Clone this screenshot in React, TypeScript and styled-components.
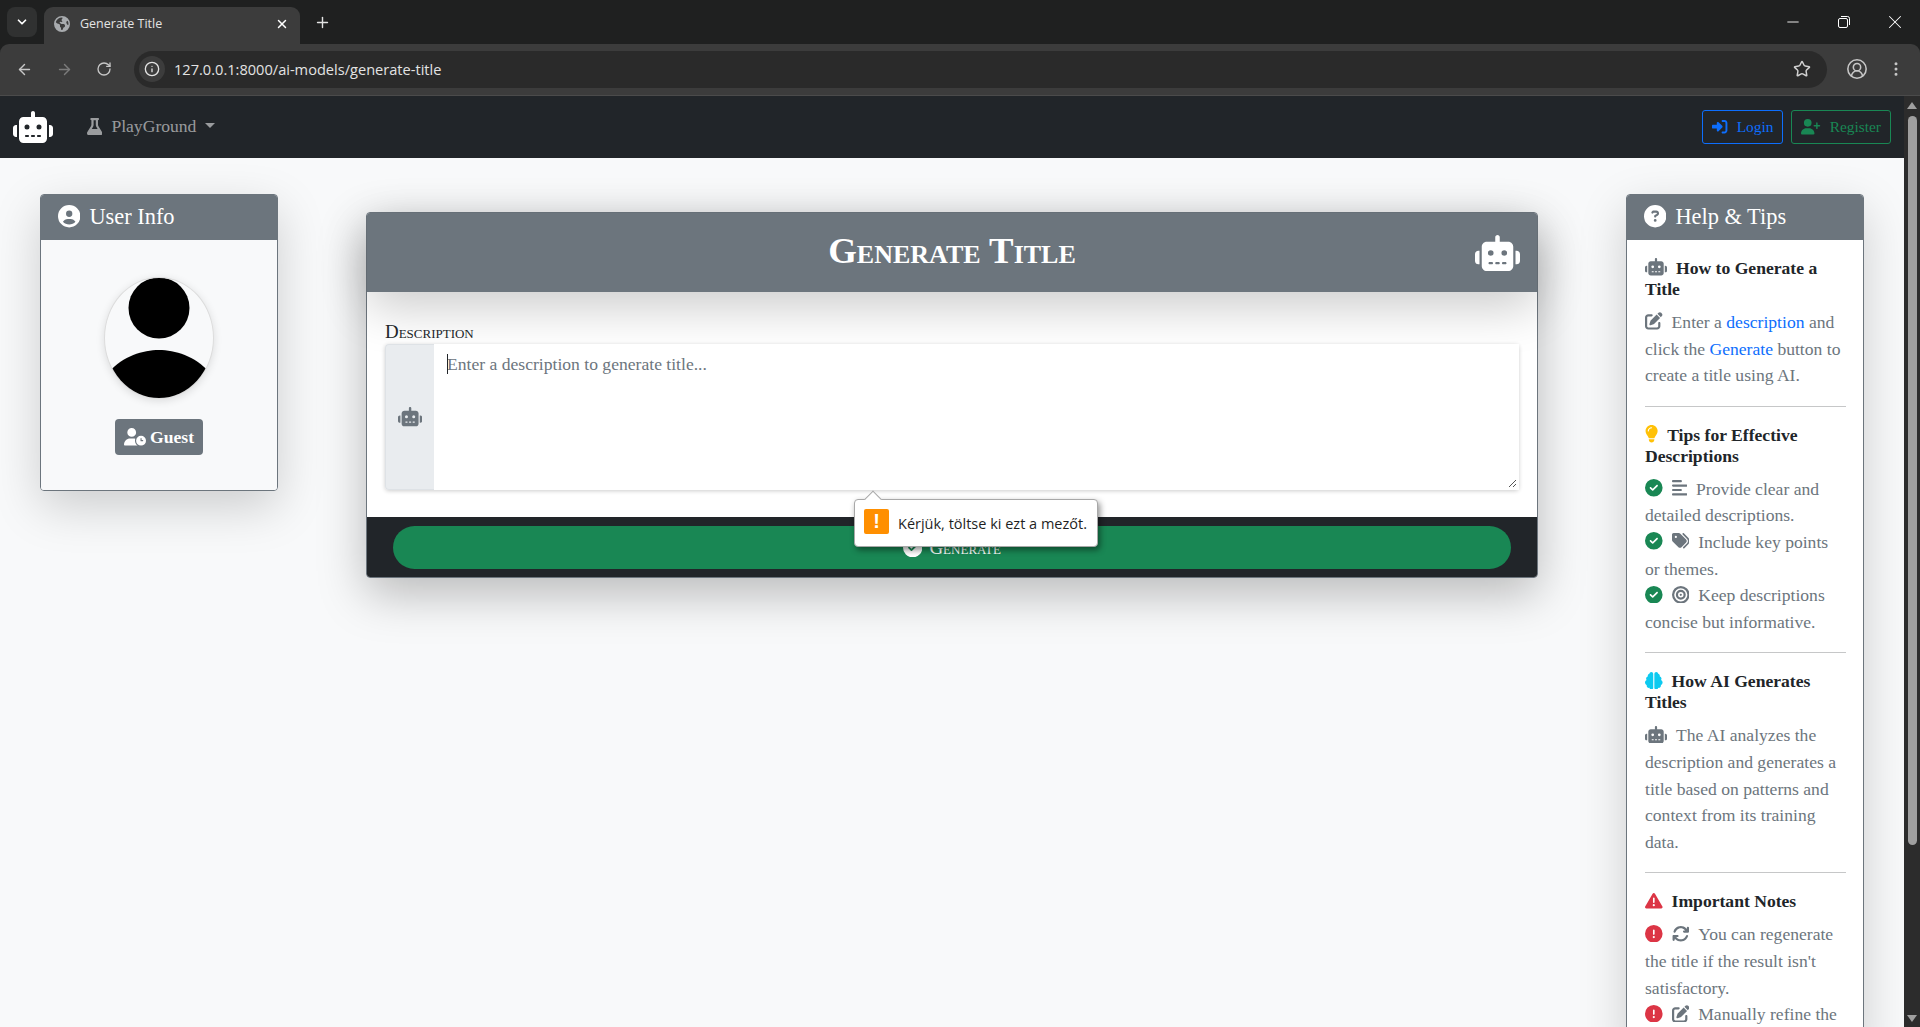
import React from 'react';
import styled, { createGlobalStyle } from 'styled-components';
import { ArrowLeft, ArrowRight, ChevronDown, CircleUserRound, EllipsisVertical, Info, Minus, Plus, RotateCw, Star, X } from 'lucide-react';
import {
  FaAlignLeft,
  FaArrowsRotate,
  FaBrain,
  FaBullseye,
  FaCircleCheck,
  FaCircleExclamation,
  FaCircleQuestion,
  FaCircleUser,
  FaEarthAmericas,
  FaFlask,
  FaLightbulb,
  FaPenToSquare,
  FaRightToBracket,
  FaRobot,
  FaTags,
  FaTriangleExclamation,
  FaUserClock,
  FaUserPlus,
} from 'react-icons/fa6';

const GlobalStyle = createGlobalStyle`
  html, body {
    margin: 0;
    height: 100%;
    overflow: hidden;
    background: #1f2020;
    font-family: "Liberation Serif", "Times New Roman", serif;
  }
  * { box-sizing: border-box; }
`;

const TabStrip = styled.div`
  height: 44px;
  background: #1f2020;
  display: flex;
  align-items: flex-start;
  color: #fff;
  padding: 7px 0 0 7px;
`;

const TabSearch = styled.div`
  width: 30px;
  height: 30px;
  background: #303131;
  border-radius: 8px;
  display: flex;
  align-items: center;
  justify-content: center;
`;

const Tab = styled.div`
  width: 256px;
  height: 37px;
  margin-left: 7px;
  background: #3c3c3c;
  border-radius: 9px 9px 0 0;
  display: flex;
  align-items: center;
  padding: 0 11px 4px 10px;
  gap: 10px;
  font: 12.5px "Open Sans", sans-serif;
  color: #e3e3e3;
`;

const TabTitle = styled.span`
  flex: 1;
`;

const NewTab = styled.div`
  margin: 7px 0 0 14px;
  height: 16px;
  display: flex;
`;

const WindowControls = styled.div`
  margin: -7px 0 0 auto;
  display: flex;
`;

const WindowButton = styled.div`
  width: 51px;
  height: 44px;
  display: flex;
  align-items: center;
  justify-content: center;
`;

const RestoreIcon = styled.svg`
  width: 12px;
  height: 12px;
`;

const Toolbar = styled.div`
  height: 52px;
  background: #3c3c3c;
  border-bottom: 1px solid #4b4b4b;
  border-radius: 9px 9px 0 0;
  display: flex;
  align-items: center;
  padding: 0 0 1px 16px;
  color: #c7c7c7;
`;

const NavButtons = styled.div`
  display: flex;
  align-items: center;
  gap: 23px;
  width: 118px;
`;

const Omnibox = styled.div`
  width: 1693px;
  height: 37px;
  background: #2a2a2a;
  border-radius: 19px;
  display: flex;
  align-items: center;
  padding: 0 16px 0 5px;
  font: 14.6px "Open Sans", sans-serif;
  color: #e3e3e3;
`;

const InfoChip = styled.div`
  width: 26px;
  height: 26px;
  border-radius: 50%;
  background: #3c3c3c;
  display: flex;
  align-items: center;
  justify-content: center;
  margin-right: 9px;
`;

const OmniStar = styled.div`
  margin-left: auto;
  display: flex;
  color: #d0d0d0;
`;

const ToolbarEnd = styled.div`
  display: flex;
  align-items: center;
  gap: 19px;
  margin-left: 19px;
`;

const Viewport = styled.div`
  display: flex;
  height: 931px;
`;

const Page = styled.div`
  flex: 1;
  min-width: 0;
  overflow: hidden;
  position: relative;
  background: #f8f9fa;
`;

const ScrollTrack = styled.div`
  width: 16px;
  background: #2c2c2c;
  display: flex;
  flex-direction: column;
  align-items: center;
  padding-top: 6px;
`;

const ScrollArrow = styled.div<{ $down?: boolean }>`
  width: 0;
  height: 0;
  border-left: 5px solid transparent;
  border-right: 5px solid transparent;
  ${({ $down }) => ($down ? 'border-top: 7px solid #9f9f9f;' : 'border-bottom: 7px solid #9f9f9f;')}
  margin-top: ${({ $down }) => ($down ? 'auto' : '0')};
  margin-bottom: ${({ $down }) => ($down ? '5px' : '0')};
`;

const ScrollThumb = styled.div`
  width: 9px;
  height: 729px;
  margin-top: 7px;
  background: #9f9f9f;
  border-radius: 5px;
`;

const Navbar = styled.nav`
  height: 62px;
  background: #212529;
  display: flex;
  align-items: center;
  padding: 0 13px;
`;

const Brand = styled.div`
  display: flex;
  color: #fff;
`;

const PlayMenu = styled.div`
  display: flex;
  align-items: center;
  margin: -1px 0 0 34px;
  font-size: 17.6px;
  color: rgba(255, 255, 255, 0.55);
`;

const MenuLabel = styled.span`
  margin-left: 9px;
`;

const MenuCaret = styled.span`
  margin-left: 9px;
  margin-top: -2px;
  width: 0;
  height: 0;
  border-top: 5.3px solid currentColor;
  border-left: 5.3px solid transparent;
  border-right: 5.3px solid transparent;
`;

const NavActions = styled.div`
  margin-left: auto;
  display: flex;
  gap: 8px;
`;

const NavButton = styled.div<{ $color: string }>`
  height: 34px;
  padding: 0 9px;
  display: flex;
  align-items: center;
  gap: 9px;
  font-size: 15.4px;
  border: 1px solid ${({ $color }) => $color};
  border-radius: 3px;
  color: ${({ $color }) => $color};
`;

const Content = styled.main`
  display: grid;
  grid-template-columns: 238px 1172px 238px;
  justify-content: space-between;
  align-items: start;
  padding: 36px 40px 0;
`;

const Card = styled.section`
  border: 1px solid #6c757d;
  border-radius: 4px;
  box-shadow: 0 16px 48px rgba(0, 0, 0, 0.175);
  overflow: hidden;
`;

const SideHeader = styled.header`
  height: 45px;
  background: #6c757d;
  color: #fff;
  font-size: 22.4px;
  display: flex;
  align-items: center;
  gap: 9px;
  padding: 0 17px 2px;
`;

const UserBody = styled.div`
  background: #f8f9fa;
  height: 250px;
  display: flex;
  flex-direction: column;
  align-items: center;
  padding-top: 37px;
`;

const Avatar = styled.div`
  width: 110px;
  height: 122px;
  border-radius: 50%;
  border: 1px solid #dcdcdc;
  box-shadow: 0 2px 8px rgba(0, 0, 0, 0.12);
  background: #f8f9fa;
  overflow: hidden;
  display: flex;
`;

const GuestBadge = styled.div`
  margin-top: 20px;
  width: 88px;
  height: 36px;
  background: #6c757d;
  border-radius: 4px;
  color: #fff;
  font-size: 17.6px;
  font-weight: 700;
  display: flex;
  align-items: center;
  justify-content: center;
  gap: 4px;
`;

const MainColumn = styled.div`
  margin-top: 18px;
`;

const MainCard = styled(Card)`
  position: relative;
  overflow: visible;
  box-shadow: 0 16px 48px rgba(0, 0, 0, 0.26);
`;

const MainHeader = styled.header`
  height: 79px;
  background: #6c757d;
  border-radius: 3px 3px 0 0;
  box-shadow: 0 16px 48px rgba(0, 0, 0, 0.2);
  position: relative;
  color: #fff;
  display: flex;
  align-items: center;
  padding: 0 17px 0 0;
`;

const MainTitle = styled.h2`
  flex: 1;
  margin: -4px 0 0 62px;
  text-align: center;
  font-size: 36.8px;
  font-weight: 700;
  font-variant: small-caps;
`;

const MainBody = styled.div`
  height: 225px;
  background: #fff;
  padding: 30px 18px 0;
`;

const FieldLabel = styled.label`
  display: block;
  height: 22px;
  font-size: 18.9px;
  line-height: 20px;
  font-variant: small-caps;
  color: #212529;
  position: relative;
`;

const InputGroup = styled.div`
  display: flex;
  height: 146px;
  border-radius: 4px;
  box-shadow: 0 1px 4px rgba(0, 0, 0, 0.2);
  position: relative;
`;

const InputAddon = styled.div`
  width: 49px;
  background: #e9ecef;
  border: 1px solid #dee2e6;
  border-right: 0;
  border-radius: 4px 0 0 4px;
  display: flex;
  align-items: center;
  justify-content: center;
  color: #6c757d;
`;

const DescriptionArea = styled.div`
  flex: 1;
  background: #fff;
  padding: 7px 13px;
  position: relative;
  font-size: 17.6px;
  line-height: 26.4px;
  color: #6c757d;
`;

const Caret = styled.span`
  position: absolute;
  left: 13px;
  top: 10px;
  width: 1px;
  height: 20px;
  background: #212529;
`;

const ResizeGrip = styled.svg`
  position: absolute;
  right: 2px;
  bottom: 2px;
  width: 9px;
  height: 9px;
`;

const MainFooter = styled.footer`
  height: 60px;
  background: #212529;
  border-radius: 0 0 3px 3px;
  padding: 9px 26px 8px;
`;

const GenerateButton = styled.div`
  height: 43px;
  background: #198754;
  border-radius: 22px;
  color: #fff;
  font-size: 18.9px;
  font-variant: small-caps;
  display: flex;
  align-items: center;
  justify-content: center;
  gap: 7px;
`;

const ValidationBubble = styled.div`
  position: absolute;
  left: 487px;
  top: 286px;
  width: 244px;
  height: 48px;
  background: #fff;
  border: 1px solid #a8a8a8;
  border-radius: 4px;
  box-shadow: 2px 3px 6px rgba(0, 0, 0, 0.45);
  display: flex;
  align-items: center;
  padding: 0 9px;
  gap: 9px;
  font: 14.5px "Open Sans", sans-serif;
  white-space: nowrap;
  color: #1f1f1f;
`;

const BubbleArrow = styled.span`
  position: absolute;
  left: 12px;
  top: -7px;
  width: 12px;
  height: 12px;
  background: #fff;
  border-left: 1px solid #a8a8a8;
  border-top: 1px solid #a8a8a8;
  transform: rotate(45deg);
`;

const BubbleMark = styled.span`
  width: 25px;
  height: 25px;
  background: #ff8f00;
  border-radius: 2px;
  color: #fff;
  font: 700 20px/25px "Liberation Sans", sans-serif;
  text-align: center;
  flex: none;
  margin-top: -3px;
`;

const HelpBody = styled.div`
  background: #fff;
  padding: 18px 17px 0 18px;
`;

const HelpHeading = styled.h6`
  margin: 0 0 9px;
  font-size: 17.6px;
  font-weight: 700;
  line-height: 21px;
  color: #212529;
`;

const HelpText = styled.div`
  font-size: 17.6px;
  line-height: 26.6px;
  color: #6c757d;
`;

const HelpLink = styled.span`
  color: #0d6efd;
`;

const Divider = styled.hr`
  border: 0;
  border-top: 1px solid #c6c7c8;
  margin: 17px 0 18px;
`;

// FontAwesome glyphs are wider or narrower than 1em; $ratio is viewBox width / height
const Ic = styled.span<{ $size?: number; $color?: string; $gap?: number; $ratio?: number }>`
  display: inline-flex;
  vertical-align: -2px;
  font-size: ${({ $size }) => $size ?? 17.6}px;
  color: ${({ $color }) => $color ?? 'inherit'};
  margin-right: ${({ $gap }) => $gap ?? 0}px;
  svg {
    width: ${({ $ratio }) => $ratio ?? 1}em;
    height: 1em;
    display: block;
  }
`;

const gray = '#6c757d';
const green = '#198754';
const red = '#dc3545';

const Tips: { icon: React.ReactNode; ratio: number; text: string }[] = [
  { icon: <FaAlignLeft />, ratio: 0.875, text: 'Provide clear and detailed descriptions.' },
  { icon: <FaTags />, ratio: 1, text: 'Include key points or themes.' },
  { icon: <FaBullseye />, ratio: 1, text: 'Keep descriptions concise but informative.' },
];

const Notes: { icon: React.ReactNode; text: string }[] = [
  { icon: <FaArrowsRotate />, text: "You can regenerate the title if the result isn't satisfactory." },
  { icon: <FaPenToSquare />, text: 'Manually refine the generated title.' },
];

const App: React.FC = () => {
  return (
    <>
      <GlobalStyle />
      <TabStrip>
        <TabSearch>
          <ChevronDown size={14} strokeWidth={3} />
        </TabSearch>
        <Tab>
          <Ic $size={16} $color="#a8abae">
            <FaEarthAmericas />
          </Ic>
          <TabTitle>Generate Title</TabTitle>
          <X size={14} strokeWidth={2.5} color="#fff" />
        </Tab>
        <NewTab>
          <Plus size={17} strokeWidth={2} color="#e3e3e3" />
        </NewTab>
        <WindowControls>
          <WindowButton>
            <Minus size={18} strokeWidth={1.2} />
          </WindowButton>
          <WindowButton>
            <RestoreIcon viewBox="0 0 12 12" fill="none" stroke="#fff" strokeWidth="1">
              <rect x="0.5" y="2.5" width="9" height="9" rx="1.5" />
              <path d="M3 .5h6.5a2 2 0 0 1 2 2V9" />
            </RestoreIcon>
          </WindowButton>
          <WindowButton>
            <X size={22} strokeWidth={1.1} />
          </WindowButton>
        </WindowControls>
      </TabStrip>
      <Toolbar>
        <NavButtons>
          <ArrowLeft size={17} />
          <ArrowRight size={17} color="#7b7b7b" />
          <RotateCw size={16} />
        </NavButtons>
        <Omnibox>
          <InfoChip>
            <Info size={16} />
          </InfoChip>
          127.0.0.1:8000/ai-models/generate-title
          <OmniStar>
            <Star size={18} />
          </OmniStar>
        </Omnibox>
        <ToolbarEnd>
          <CircleUserRound size={22} strokeWidth={1.7} />
          <EllipsisVertical size={18} />
        </ToolbarEnd>
      </Toolbar>
      <Viewport>
        <Page>
          <Navbar>
            <Brand>
              <Ic $size={32} $ratio={1.25}>
                <FaRobot />
              </Ic>
            </Brand>
            <PlayMenu>
              <Ic $ratio={0.875}>
                <FaFlask />
              </Ic>
              <MenuLabel>PlayGround</MenuLabel>
              <MenuCaret />
            </PlayMenu>
            <NavActions>
              <NavButton $color="#0d6efd">
                <Ic $size={15.4}>
                  <FaRightToBracket />
                </Ic>
                Login
              </NavButton>
              <NavButton $color={green}>
                <Ic $size={15.4} $ratio={1.25}>
                  <FaUserPlus />
                </Ic>
                Register
              </NavButton>
            </NavActions>
          </Navbar>
          <Content>
            <Card>
              <SideHeader>
                <Ic $size={22.4}>
                  <FaCircleUser />
                </Ic>
                User Info
              </SideHeader>
              <UserBody>
                <Avatar>
                  <svg width="108" height="120" viewBox="0 0 108 120">
                    <circle cx="54" cy="30" r="30.5" fill="#000" />
                    <path d="M4 94C18 78 38 72 54 72s36 6 50 22v26H4z" fill="#000" />
                  </svg>
                </Avatar>
                <GuestBadge>
                  <Ic $ratio={1.25}>
                    <FaUserClock />
                  </Ic>
                  Guest
                </GuestBadge>
              </UserBody>
            </Card>

            <MainColumn>
              <MainCard>
                <MainHeader>
                  <MainTitle>Generate Title</MainTitle>
                  <Ic $size={36} $ratio={1.25}>
                    <FaRobot />
                  </Ic>
                </MainHeader>
                <MainBody>
                  <FieldLabel>Description</FieldLabel>
                  <InputGroup>
                    <InputAddon>
                      <Ic $size={19.36} $ratio={1.25}>
                        <FaRobot />
                      </Ic>
                    </InputAddon>
                    <DescriptionArea>
                      <Caret />
                      Enter a description to generate title...
                      <ResizeGrip viewBox="0 0 9 9" stroke="#555" strokeWidth="1">
                        <path d="M1 8 8 1M5 8l3-3" />
                      </ResizeGrip>
                    </DescriptionArea>
                  </InputGroup>
                </MainBody>
                <MainFooter>
                  <GenerateButton>
                    <Ic $size={19.36}>
                      <FaCircleCheck />
                    </Ic>
                    Generate
                  </GenerateButton>
                </MainFooter>
                <ValidationBubble>
                  <BubbleArrow />
                  <BubbleMark>!</BubbleMark>
                  Kérjük, töltse ki ezt a mezőt.
                </ValidationBubble>
              </MainCard>
            </MainColumn>

            <Card>
              <SideHeader>
                <Ic $size={22.4}>
                  <FaCircleQuestion />
                </Ic>
                Help &amp; Tips
              </SideHeader>
              <HelpBody>
                <HelpHeading>
                  <Ic $ratio={1.25} $color={gray} $gap={9}>
                    <FaRobot />
                  </Ic>
                  How to Generate a Title
                </HelpHeading>
                <HelpText>
                  <Ic $color={gray} $gap={9}>
                    <FaPenToSquare />
                  </Ic>
                  Enter a <HelpLink>description</HelpLink> and click the <HelpLink>Generate</HelpLink> button to create a
                  title using AI.
                </HelpText>
                <Divider />
                <HelpHeading>
                  <Ic $ratio={0.75} $color="#ffc107" $gap={9}>
                    <FaLightbulb />
                  </Ic>
                  Tips for Effective Descriptions
                </HelpHeading>
                {Tips.map((tip) => (
                  <HelpText key={tip.text}>
                    <Ic $color={green} $gap={9}>
                      <FaCircleCheck />
                    </Ic>
                    <Ic $ratio={tip.ratio} $color={gray} $gap={9}>
                      {tip.icon}
                    </Ic>
                    {tip.text}
                  </HelpText>
                ))}
                <Divider />
                <HelpHeading>
                  <Ic $color="#0dcaf0" $gap={9}>
                    <FaBrain />
                  </Ic>
                  How AI Generates Titles
                </HelpHeading>
                <HelpText>
                  <Ic $ratio={1.25} $color={gray} $gap={9}>
                    <FaRobot />
                  </Ic>
                  The AI analyzes the description and generates a title based on patterns and context from its training
                  data.
                </HelpText>
                <Divider />
                <HelpHeading>
                  <Ic $ratio={1} $color={red} $gap={9}>
                    <FaTriangleExclamation />
                  </Ic>
                  Important Notes
                </HelpHeading>
                {Notes.map((note) => (
                  <HelpText key={note.text}>
                    <Ic $color={red} $gap={9}>
                      <FaCircleExclamation />
                    </Ic>
                    <Ic $color={gray} $gap={9}>
                      {note.icon}
                    </Ic>
                    {note.text}
                  </HelpText>
                ))}
              </HelpBody>
            </Card>
          </Content>
        </Page>
        <ScrollTrack>
          <ScrollArrow />
          <ScrollThumb />
          <ScrollArrow $down />
        </ScrollTrack>
      </Viewport>
    </>
  );
};

export default App;
